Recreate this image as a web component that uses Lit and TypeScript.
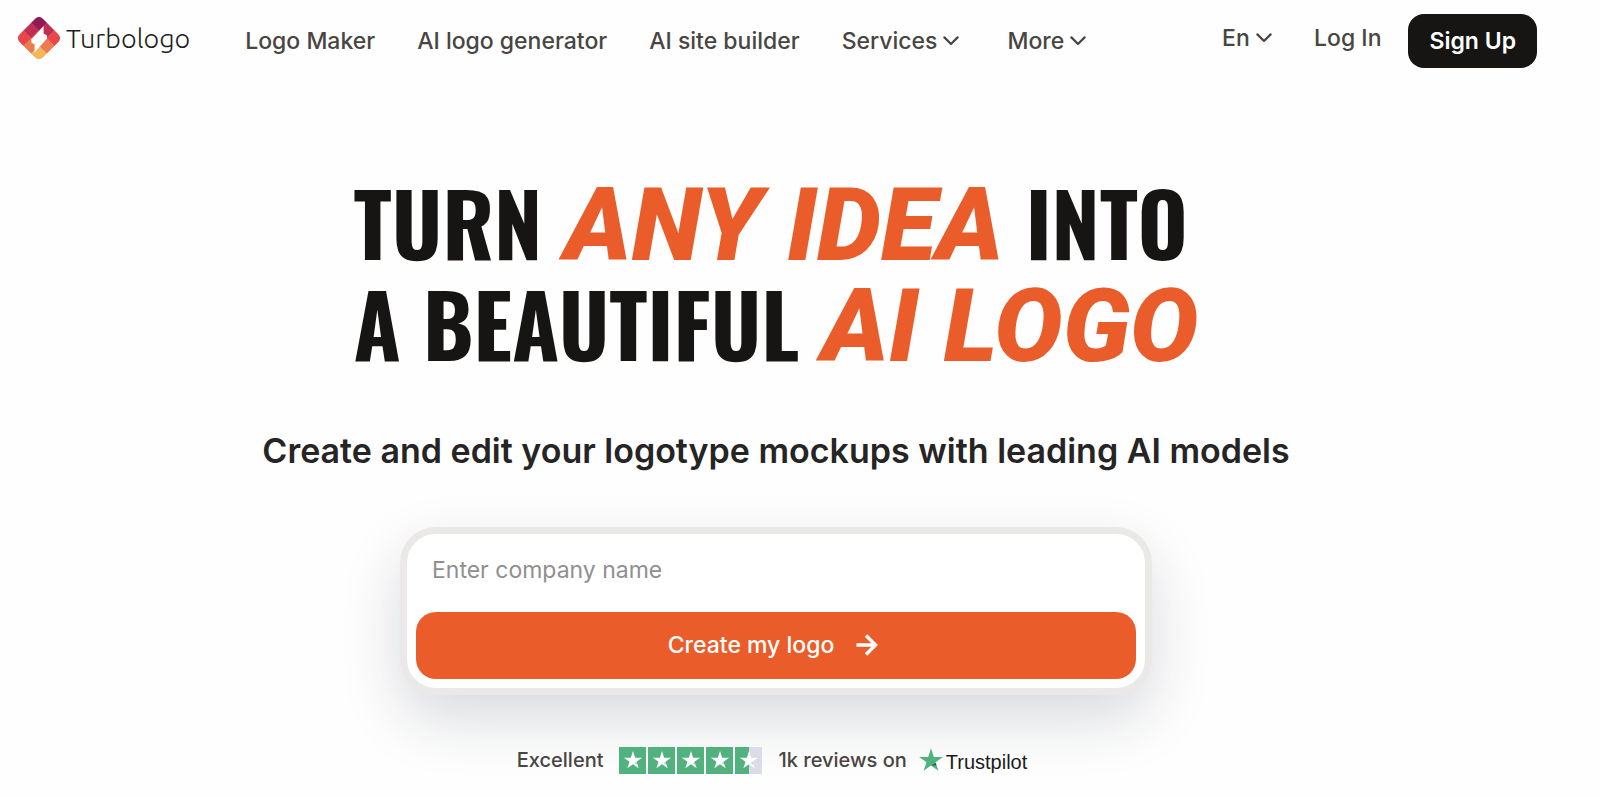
import { LitElement, html, css, svg } from "lit";
import { customElement } from "lit/decorators.js";

const STAR = "M12 1.2 14.6 9.2H23L16.2 14.1 18.8 22 12 17.1 5.2 22 7.8 14.1 1 9.2H9.4Z";

const chevron = html`<svg class="chevron" viewBox="0 0 16 10" aria-hidden="true">
  <path d="M1.4 1.4 8 8 14.6 1.4" fill="none" stroke="currentColor" stroke-width="2.2" stroke-linecap="round" stroke-linejoin="round" />
</svg>`;

/* Diamond mark: a 3 x 3 grid turned by 45 degrees, one colour per row of the diamond. */
const ROW_COLOURS = ["#8f1b53", "#c02e53", "#ea4549", "#ee7a50", "#f4b65a"];
const CELLS = [0, 1, 2].flatMap((x) => [0, 1, 2].map((y) => ({ x, y })));

@customElement("site-header")
export class SiteHeader extends LitElement {
  static styles = css`
    :host {
      display: block;
      font-family: Inter, "Liberation Sans", sans-serif;
      color: #484542;
    }
    .bar {
      display: flex;
      align-items: flex-start;
      padding: 14px 15px 0 18px;
    }
    .brand {
      display: flex;
      align-items: center;
      gap: 6px;
      height: 48px;
      color: #1f1f1f;
      text-decoration: none;
      font: 300 27px/48px Ubuntu, "Noto Sans", "Open Sans", sans-serif;
    }
    .mark {
      width: 42px;
      height: 42px;
    }
    .nav {
      display: flex;
      gap: 42px;
      margin-left: 55px;
      height: 54px;
    }
    .item,
    .lang {
      display: flex;
      align-items: center;
      gap: 6px;
      padding: 0;
      border: 0;
      background: none;
      color: inherit;
      text-decoration: none;
      font: 450 23px/28px Inter, sans-serif;
      white-space: nowrap;
    }
    button.item {
      padding-right: 6px;
    }
    .chevron {
      width: 16px;
      height: 10px;
    }
    .account {
      display: flex;
      margin-left: auto;
    }
    .account .item,
    .lang {
      height: 48px;
    }
    .lang {
      margin-right: 42px;
    }
    .select {
      appearance: none;
      padding: 0;
      border: 0;
      background: none;
      color: inherit;
      font: inherit;
    }
    .signup {
      height: 54px;
      margin-left: 27px;
      padding: 0 21px;
      border: 0;
      border-radius: 16px;
      background: #161513;
      color: #fff;
      font: 600 23px/28px Inter, sans-serif;
    }
  `;

  render() {
    return html`<header class="bar">
      <a class="brand" href="#">
        <svg class="mark" viewBox="0 0 42 42" aria-hidden="true">
          <defs><clipPath id="round"><rect width="33" height="33" rx="5.5" /></clipPath></defs>
          <g transform="translate(21 -2.3) rotate(45)">
            <g clip-path="url(#round)">
              ${CELLS.map(
                ({ x, y }) => svg`<rect x=${x * 11} y=${y * 11} width="11.3" height="11.3" fill=${ROW_COLOURS[x + y]} />`,
              )}
            </g>
          </g>
          <path fill="#fff" d="M25.6 9v7.4l3.4 2v3.2L16.6 35.6v-8.2l-3.3-2v-3.2Z" />
        </svg>
        <span>Turbologo</span>
      </a>
      <nav class="nav" aria-label="Main">
        <a class="item" href="#">Logo Maker</a>
        <a class="item" href="#">AI logo generator</a>
        <a class="item" href="#">AI site builder</a>
        <button class="item" aria-haspopup="true">Services ${chevron}</button>
        <button class="item" aria-haspopup="true">More ${chevron}</button>
      </nav>
      <div class="account">
        <label class="lang">
          <select class="select" aria-label="Language"><option>En</option></select>${chevron}
        </label>
        <a class="item" href="#">Log In</a>
        <button class="signup">Sign Up</button>
      </div>
    </header>`;
  }
}

@customElement("trust-row")
export class TrustRow extends LitElement {
  static styles = css`
    :host {
      display: flex;
      align-items: center;
      justify-content: center;
      color: #484542;
      font: 450 20px/28px Inter, sans-serif;
    }
    .stars {
      display: flex;
      gap: 2px;
      margin: 0 16px;
    }
    .box {
      display: grid;
      place-items: center;
      width: 27px;
      height: 27px;
      background: #51b17f;
    }
    .half {
      background: linear-gradient(90deg, #51b17f 50%, #dcdce6 50%);
    }
    .star {
      width: 20px;
      height: 20px;
    }
    .pilot {
      display: flex;
      align-items: center;
      gap: 2px;
      margin-left: 11px;
      color: #1b1b1b;
      text-decoration: none;
    }
    .pilot-star {
      width: 26px;
      height: 26px;
    }
    .pilot-name {
      padding-top: 4px;
      font: 400 20px/28px "Liberation Sans", Arial, sans-serif;
    }
  `;

  render() {
    return html`<span>Excellent</span>
      <span class="stars" role="img" aria-label="4.5 out of 5 stars">
        ${[1, 1, 1, 1, 0.5].map(
          (fill) => html`<span class="box ${fill < 1 ? "half" : ""}">
            <svg class="star" viewBox="0 0 24 24"><path d=${STAR} fill="#fff" /><path d="M14 15.6 16.2 14.6 17 17Z" fill="#51b17f" opacity=".7" /></svg>
          </span>`,
        )}
      </span>
      <span>1k reviews on</span>
      <a class="pilot" href="#">
        <svg class="pilot-star" viewBox="0 0 24 24" aria-hidden="true">
          <path d=${STAR} fill="#51b17f" /><path d="M12 17.1 16.4 14.8 17 16.8Z" fill="#245c40" />
        </svg>
        <span class="pilot-name">Trustpilot</span>
      </a>`;
  }
}

@customElement("app-root")
export class AppRoot extends LitElement {
  static styles = css`
    :host {
      display: block;
      min-height: 100vh;
      box-sizing: border-box;
      padding-right: 3%;
      background: #fefefe;
      font-family: Inter, sans-serif;
    }
    .hero {
      display: flex;
      flex-direction: column;
      align-items: center;
      padding: 103px 24px 16px;
    }
    .title {
      margin: 0;
      color: #161513;
      font: 700 86px/101px Oswald, "Roboto Condensed", Roboto, sans-serif;
      text-transform: uppercase;
      white-space: nowrap;
    }
    .line {
      display: block;
      height: 101px;
    }
    .accent {
      color: #ea5d2a;
      font: italic 900 102px/101px Roboto, "Liberation Sans", sans-serif;
    }
    .lead {
      margin: 54px 0 0;
      color: #262424;
      font: 600 34px/48px Inter, sans-serif;
      text-align: center;
    }
    .card {
      display: flex;
      flex-direction: column;
      box-sizing: border-box;
      width: 100%;
      max-width: 752px;
      margin-top: 52px;
      padding: 9px;
      border: 7px solid #ebe9e8;
      border-radius: 36px;
      background: #fff;
      box-shadow: 0 24px 60px rgba(24, 32, 56, 0.16);
    }
    .name {
      height: 69px;
      box-sizing: border-box;
      padding: 0 16px 16px;
      border: 0;
      outline: 0;
      background: none;
      color: #262424;
      font: 400 23px/28px Inter, sans-serif;
    }
    .name::placeholder {
      color: #8f8f8f;
      opacity: 1;
    }
    .create {
      display: flex;
      align-items: center;
      justify-content: center;
      gap: 22px;
      height: 67px;
      padding: 0 6px 2px 0;
      border: 0;
      border-radius: 20px;
      background: #ea5d2a;
      color: #fff;
      font: 450 23px/28px Inter, sans-serif;
    }
    .arrow {
      width: 22px;
      height: 22px;
    }
    trust-row {
      margin-top: 49px;
      padding-right: 8px;
    }
  `;

  render() {
    return html`<site-header></site-header>
      <main class="hero">
        <h1 class="title">
          <span class="line">Turn <span class="accent">any idea</span> into</span>
          <span class="line">a beautiful <span class="accent">AI logo</span></span>
        </h1>
        <p class="lead">Create and edit your logotype mockups with leading AI models</p>
        <form class="card" @submit=${(e: Event) => e.preventDefault()}>
          <input class="name" type="text" aria-label="Company name" placeholder="Enter company name" />
          <button class="create" type="submit">
            Create my logo
            <svg class="arrow" viewBox="0 0 22 22" aria-hidden="true">
              <path d="M0.5 11H19.5M10 1.5 19.5 11 10 20.5" fill="none" stroke="currentColor" stroke-width="3.4" />
            </svg>
          </button>
        </form>
        <trust-row></trust-row>
      </main>`;
  }
}
